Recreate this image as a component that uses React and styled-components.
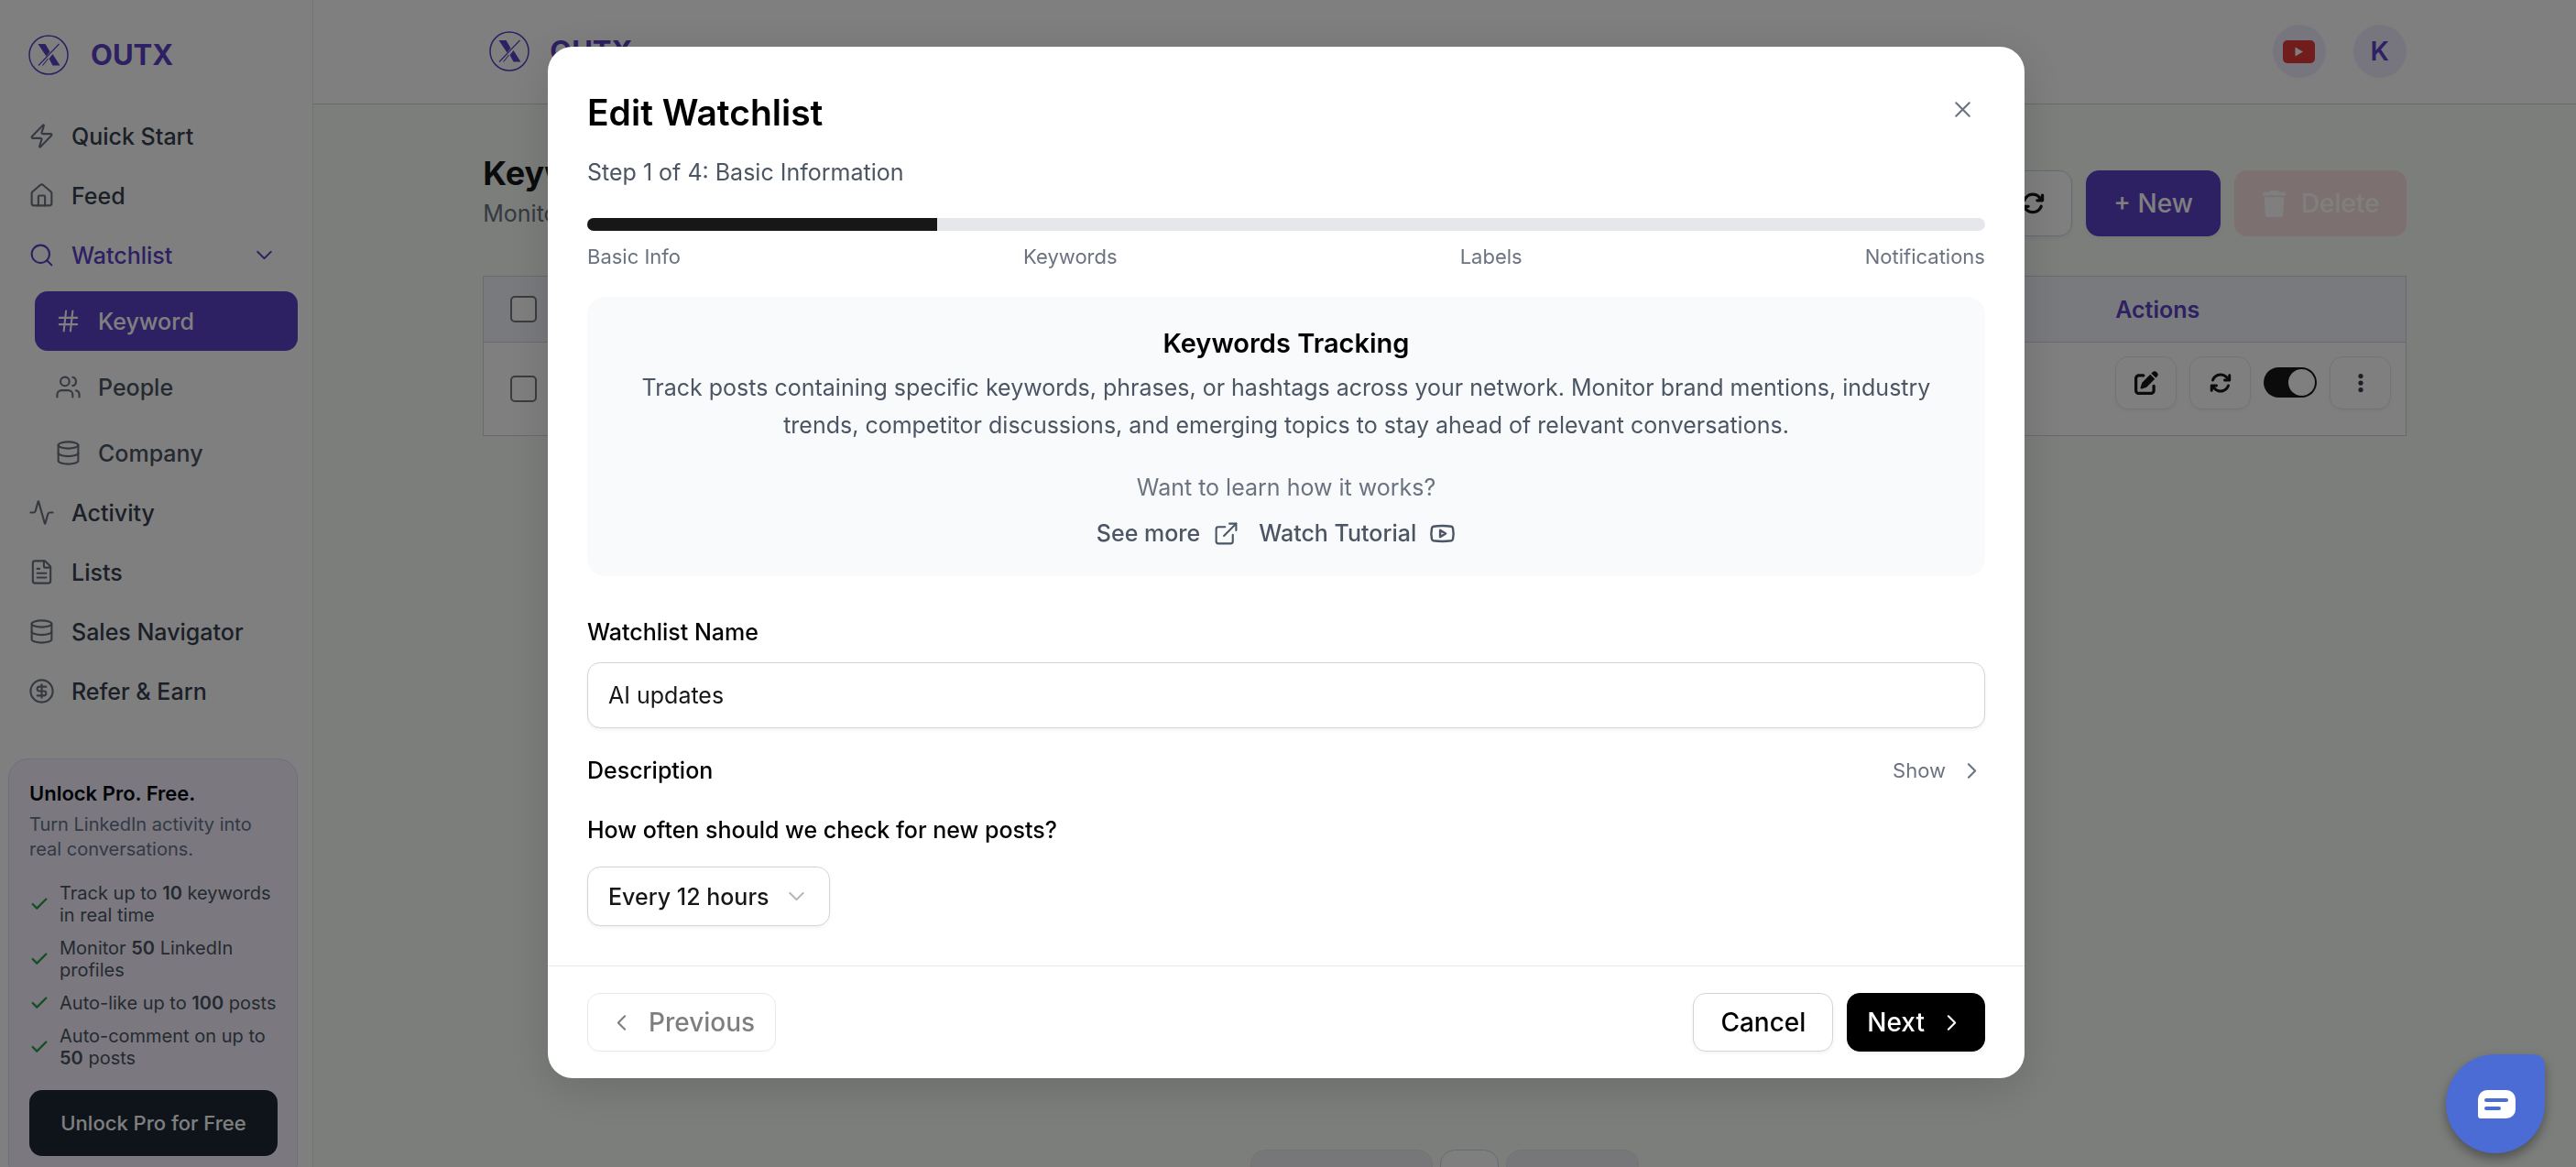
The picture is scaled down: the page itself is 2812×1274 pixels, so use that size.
import React, { useState } from "react";
import styled, { createGlobalStyle, css } from "styled-components";
import {
  Activity,
  Check,
  ChevronDown,
  ChevronLeft,
  ChevronRight,
  CircleDollarSign,
  Database,
  ExternalLink,
  FileText,
  Hash,
  House,
  Search,
  Users,
  X,
  Youtube,
  Zap,
} from "lucide-react";
import {
  FaArrowsRotate,
  FaEllipsisVertical,
  FaPenToSquare,
  FaTrash,
} from "react-icons/fa6";

const colors = {
  primary: "#5b40c6",
  primaryLight: "#eeeafa",
  page: "#f8fcf9",
  textMain: "#374151",
  textSecond: "#4b5563",
  textMuted: "#6b7280",
  border: "#d1d5db",
  line: "#e5e7eb",
  dark: "#171717",
};

const GlobalStyle = createGlobalStyle`
  * {
    box-sizing: border-box;
  }

  body {
    margin: 0;
    overflow: hidden;
    background: ${colors.page};
    color: #000;
    font-family: Inter, "Liberation Sans", sans-serif;
    font-size: 25px;
    line-height: 36px;
  }

  h1, h2, h3, p, ul {
    margin: 0;
    padding: 0;
  }

  ul {
    list-style: none;
  }

  a {
    color: inherit;
    text-decoration: none;
  }

  button, input, select {
    font: inherit;
    color: inherit;
    margin: 0;
  }

  svg {
    flex: none;
  }
`;

/* ---------- page shell ---------- */

const Shell = styled.div`
  display: flex;
  height: 100vh;
  overflow: hidden;
`;

const Sidebar = styled.aside`
  flex: none;
  width: 342px;
  padding: 38px 16px 0 9px;
  background: #fff;
  border-right: 1px solid ${colors.line};
`;

const Brand = styled.a`
  display: flex;
  align-items: center;
  gap: 24px;
  color: ${colors.primary};
  font-size: 31px;
  font-weight: 700;
`;

const SidebarBrand = styled(Brand)`
  padding-left: 22px;
  margin-bottom: 34px;
`;

const NavItem = styled.a`
  display: flex;
  align-items: center;
  gap: 18px;
  height: 65px;
  padding: 0 22px;
  border-radius: 14px;
  color: ${(props) => (props.$open ? colors.primary : colors.textMain)};
  font-weight: 500;

  & > svg {
    color: ${(props) => (props.$open ? colors.primary : colors.textMuted)};
  }

  & > span {
    flex: 1;
  }
`;

const SubNav = styled.div`
  display: flex;
  flex-direction: column;
  gap: 7px;
  padding: 7px 0 0 29px;
`;

const SubNavItem = styled(NavItem)`
  color: ${colors.textSecond};

  ${(props) =>
    props.$active &&
    css`
      background: ${colors.primary};
      color: #fff;

      & > svg {
        color: #fff;
      }
    `}
`;

const Promo = styled.section`
  margin-top: 41px;
  padding: 21px 21px 28px 22px;
  border: 1px solid #e0daf8;
  border-radius: 22px;
  background: #f6f3ff;
  font-size: 20px;

  h3 {
    font-size: 22px;
    font-weight: 600;
    line-height: 32px;
    color: #030712;
  }

  & > p {
    line-height: 27px;
    color: #64748b;
    margin: 5px 0 22px;
  }

  ul {
    display: flex;
    flex-direction: column;
    gap: 12px;
  }

  li {
    display: flex;
    align-items: center;
    gap: 11px;
    line-height: 24px;
    color: ${colors.textSecond};
  }

  li svg {
    color: #2a9d48;
  }

  b {
    font-weight: 600;
  }
`;

const PromoButton = styled.button`
  width: 100%;
  height: 72px;
  margin-top: 23px;
  border: 0;
  border-radius: 14px;
  background: #1e2936;
  color: #fff;
  font-size: 22px;
  font-weight: 500;
`;

const Main = styled.main`
  flex: 1;
  display: flex;
  flex-direction: column;
`;

const Header = styled.header`
  flex: none;
  height: 114px;
  background: #fff;
  border-bottom: 1px solid ${colors.border};
`;

const Container = styled.div`
  display: flex;
  width: 85%;
  margin: 0 auto;
`;

const HeaderRow = styled(Container)`
  align-items: center;
  gap: 30px;
  height: 112px;

  ${Brand} {
    gap: 22px;
    margin-right: auto;
    padding-left: 7px;
  }
`;

const Avatar = styled.a`
  display: grid;
  place-items: center;
  width: 58px;
  height: 58px;
  border-radius: 50%;
  background: ${colors.primaryLight};
  color: ${colors.primary};
  font-size: 29px;
  font-weight: 600;
`;

const Content = styled(Container)`
  flex: none;
  flex-direction: column;
  min-height: calc(100vh - 68px);
  padding: 53px 0 0;
`;

const TitleRow = styled.div`
  display: flex;
  justify-content: space-between;
  margin-bottom: 43px;

  h1 {
    margin-bottom: 4px;
    font-size: 36px;
    font-weight: 700;
    line-height: 44px;
    color: ${colors.dark};
  }

  p {
    color: ${colors.textMuted};
  }
`;

const Toolbar = styled.div`
  display: flex;
  align-items: center;
  gap: 15px;
  padding-top: 19px;
`;

const Button = styled.button`
  display: inline-flex;
  align-items: center;
  justify-content: center;
  gap: 15px;
  height: ${(props) => (props.$tall ? 72 : 64)}px;
  padding: 0 29px;
  border: 1px solid ${colors.border};
  border-radius: 14px;
  background: #fff;
  box-shadow: 0 2px 4px rgba(0, 0, 0, 0.05);
  font-size: 28px;
  font-weight: 500;

  &:disabled {
    opacity: 0.5;
  }
`;

const PrimaryButton = styled(Button)`
  border-color: ${colors.primary};
  background: ${colors.primary};
  color: #fff;
`;

const DangerButton = styled(Button)`
  border: 0;
  background: #fae0e0;
  color: #fff;

  &:disabled {
    opacity: 1;
    color: #fff;
    box-shadow: none;
  }
`;

const Table = styled.table`
  width: 100%;
  border-collapse: collapse;
  border: 1px solid ${colors.border};
  background: #fff;
  text-align: left;

  th {
    height: 72px;
    padding: 0 29px;
    background: #f3f5fb;
    border-bottom: 1px solid ${colors.border};
    color: ${colors.primary};
    font-weight: 600;
  }

  td {
    height: 102px;
    padding: 0 29px;
  }

  th:last-child,
  td:last-child {
    width: 332px;
    padding: 0 14px 0 15px;
  }
`;

const Tick = styled.input`
  appearance: none;
  display: block;
  width: 29px;
  height: 29px;
  border: 2px solid #78787a;
  border-radius: 5px;
  background: #fff;
`;

const RowActions = styled.div`
  display: flex;
  align-items: center;
  gap: 14px;
  padding-bottom: 14px;
`;

const IconButton = styled.button`
  display: grid;
  place-items: center;
  width: 67px;
  height: 58px;
  padding: 0;
  border: 1px solid ${colors.line};
  border-radius: 14px;
  background: #fff;
  color: ${(props) => (props.$soft ? colors.textMain : colors.dark)};
  box-shadow: 0 2px 4px rgba(0, 0, 0, 0.05);
`;

const Toggle = styled.input`
  appearance: none;
  display: flex;
  justify-content: flex-end;
  width: 58px;
  height: 33px;
  padding: 2px;
  border-radius: 17px;
  background: ${colors.dark};

  &::before {
    content: "";
    width: 29px;
    height: 29px;
    border-radius: 50%;
    background: #fff;
  }
`;

const Pagination = styled.nav`
  display: flex;
  justify-content: center;
  gap: 8px;
  margin-top: auto;
`;

const PageButton = styled.button`
  width: ${(props) => props.$width}px;
  height: 65px;
  border: 1px solid ${(props) => (props.$current ? colors.border : colors.line)};
  border-radius: 16px;
  background: ${(props) => (props.$current ? "#fff" : "#eeeff3")};
`;

/* ---------- modal ---------- */

const Overlay = styled.div`
  position: fixed;
  inset: 0;
  display: flex;
  justify-content: center;
  align-items: flex-start;
  padding: 51px 4px 0 0;
  background: rgba(0, 0, 0, 0.5);
`;

const Dialog = styled.div`
  width: 100%;
  max-width: 1612px;
  border-radius: 27px;
  background: #fff;
  box-shadow: 0 10px 50px rgba(0, 0, 0, 0.15);
`;

const DialogBody = styled.div`
  padding: 43px;
`;

const DialogHead = styled.div`
  display: flex;
  align-items: center;
  justify-content: space-between;
  height: 57px;
  margin-bottom: 19px;

  h2 {
    font-size: 39px;
    font-weight: 600;
  }
`;

const CloseButton = styled.button`
  display: flex;
  padding: 6px 10px 12px;
  border: 0;
  background: none;
  color: ${colors.textMuted};
`;

const StepText = styled.p`
  color: ${colors.textSecond};
`;

const Progress = styled.div`
  height: 14px;
  margin-top: 32px;
  overflow: hidden;
  border-radius: 7px;
  background: ${colors.line};

  div {
    height: 100%;
    background: ${colors.dark};
  }
`;

const StepLabels = styled.div`
  display: flex;
  justify-content: space-between;
  margin: 14px 0 30px;
  color: ${colors.textMuted};
  font-size: 22px;
  line-height: 28px;
`;

const Intro = styled.section`
  padding: 29px;
  border-radius: 20px;
  background: #f9fafc;
  text-align: center;

  h3 {
    margin-bottom: 7px;
    font-size: 29px;
    font-weight: 600;
    line-height: 43px;
  }

  p {
    color: ${colors.textSecond};
    line-height: 41px;
  }

  p + p {
    margin: 29px 0 14px;
    color: ${colors.textMuted};
    line-height: 36px;
  }
`;

const IntroLinks = styled.div`
  display: flex;
  justify-content: center;
  gap: 21px;
  padding-right: 22px;
  color: ${colors.textSecond};
  font-weight: 500;

  a {
    display: flex;
    align-items: center;
    gap: 14px;
  }
`;

const Field = styled.div`
  display: flex;
  flex-direction: column;
  align-items: flex-start;
  gap: ${(props) => props.$gap}px;
  margin-top: ${(props) => props.$top}px;
`;

const Label = styled.label`
  font-weight: 500;
`;

const box = css`
  border: 1px solid ${colors.border};
  border-radius: 14px;
  background: #fff;
  box-shadow: 0 2px 4px rgba(0, 0, 0, 0.05);
  color: ${colors.dark};
`;

const TextInput = styled.input`
  ${box}
  width: 100%;
  height: 72px;
  padding: 0 22px;
`;

const DescriptionRow = styled.div`
  display: flex;
  align-items: center;
  justify-content: space-between;
  margin-top: 28px;
  font-weight: 500;
`;

const ShowButton = styled.button`
  display: flex;
  align-items: center;
  gap: 14px;
  padding: 0;
  border: 0;
  background: none;
  color: ${colors.textMuted};
  font-size: 22px;
  font-weight: 400;
`;

const SelectBox = styled.div`
  display: inline-grid;
  align-items: center;

  & > * {
    grid-area: 1 / 1;
  }

  svg {
    justify-self: end;
    margin-right: 22px;
    color: #b4b4b4;
    pointer-events: none;
  }
`;

const Select = styled.select`
  ${box}
  appearance: none;
  width: 265px;
  height: 65px;
  padding: 0 60px 0 22px;
  font-weight: 500;
`;

const DialogFoot = styled.div`
  display: flex;
  gap: 15px;
  padding: 29px 43px;
  border-top: 1px solid ${colors.line};
`;

const PreviousButton = styled(Button)`
  margin-right: auto;
  padding: 0 22px;
`;

const NextButton = styled(Button)`
  padding: 0 21px;
  border-color: #000;
  background: #000;
  color: #fff;
`;

const ChatButton = styled.button`
  position: fixed;
  right: 34px;
  bottom: 15px;
  display: grid;
  place-items: center;
  width: 108px;
  height: 108px;
  padding: 0 0 0 2px;
  border: 0;
  border-radius: 54px 12px 54px 54px;
  background: #4a6cd4;
  box-shadow: 0 6px 12px rgba(0, 0, 0, 0.35);
`;

const Logo = () => (
  <svg width="44" height="44" viewBox="0 0 44 44" aria-hidden="true">
    <circle cx="22" cy="22" r="21" fill="none" stroke="currentColor" strokeWidth="1.5" />
    <path d="M10.5 10h8l5 8.500-4 5zM22.500 26l4-5 8 12.500h-8z" fill="currentColor" />
    <path d="M33.500 10L11 33.500M21.500 26l-6 7.500" stroke="currentColor" strokeWidth="1.1" />
  </svg>
);

const VideoBadge = () => (
  <svg width="35" height="25" viewBox="0 0 35 25" aria-hidden="true">
    <rect width="35" height="25" rx="5" fill="#e23b3b" />
    <path d="M13.500 7.500v10l8.500-5z" fill="#fff" />
  </svg>
);

const ChatIcon = () => (
  <svg width="41" height="31" viewBox="0 0 41 31" aria-hidden="true">
    <path
      d="M10 0h21a10 10 0 0 1 10 10v11a10 10 0 0 1-10 10H3a3 3 0 0 1-3-3V10A10 10 0 0 1 10 0z"
      fill="#fff"
    />
    <path d="M9 11h22M9 20h14" stroke="#4a6cd4" strokeWidth="4" strokeLinecap="round" />
  </svg>
);

const ICON = { size: 29, strokeWidth: 1.75 };

const topLinks = [
  { name: "Quick Start", Icon: Zap },
  { name: "Feed", Icon: House },
];

const subLinks = [
  { name: "Keyword", Icon: Hash, active: true },
  { name: "People", Icon: Users },
  { name: "Company", Icon: Database },
];

const bottomLinks = [
  { name: "Activity", Icon: Activity },
  { name: "Lists", Icon: FileText },
  { name: "Sales Navigator", Icon: Database },
  { name: "Refer & Earn", Icon: CircleDollarSign },
];

const steps = ["Basic Info", "Keywords", "Labels", "Notifications"];

const NavLinks = ({ links, as: Item = NavItem }) =>
  links.map(({ name, Icon, active }) => (
    <Item href="#" key={name} $active={active}>
      <Icon {...ICON} />
      <span>{name}</span>
    </Item>
  ));

const SideMenu = () => (
  <Sidebar>
    <SidebarBrand href="#">
      <Logo />
      OUTX
    </SidebarBrand>
    <nav>
      <NavLinks links={topLinks} />
      <NavItem href="#" $open>
        <Search {...ICON} />
        <span>Watchlist</span>
        <ChevronDown {...ICON} />
      </NavItem>
      <SubNav>
        <NavLinks links={subLinks} as={SubNavItem} />
      </SubNav>
      <NavLinks links={bottomLinks} />
    </nav>
    <Promo>
      <h3>Unlock Pro. Free.</h3>
      <p>Turn LinkedIn activity into real conversations.</p>
      <ul>
        <li><Check size={22} strokeWidth={2.5} /><span>Track up to <b>10</b> keywords in real time</span></li>
        <li><Check size={22} strokeWidth={2.5} /><span>Monitor <b>50</b> LinkedIn profiles</span></li>
        <li><Check size={22} strokeWidth={2.5} /><span>Auto-like up to <b>100</b> posts</span></li>
        <li><Check size={22} strokeWidth={2.5} /><span>Auto-comment on up to <b>50</b> posts</span></li>
      </ul>
      <PromoButton>Unlock Pro for Free</PromoButton>
    </Promo>
  </Sidebar>
);

const WatchlistPage = () => (
  <Main>
    <Header>
      <HeaderRow>
        <Brand href="#">
          <Logo />
          OUTX
        </Brand>
        <Avatar href="#" aria-label="Video tutorials"><VideoBadge /></Avatar>
        <Avatar href="#">K</Avatar>
      </HeaderRow>
    </Header>
    <Content>
      <TitleRow>
        <div>
          <h1>Keywords</h1>
          <p>Monitor keywords</p>
        </div>
        <Toolbar>
          <Button $tall aria-label="Refresh"><FaArrowsRotate size={26} color={colors.dark} /></Button>
          <PrimaryButton $tall>+ New</PrimaryButton>
          <DangerButton $tall disabled><FaTrash size={29} />Delete</DangerButton>
        </Toolbar>
      </TitleRow>
      <Table>
        <thead>
          <tr>
            <th><Tick type="checkbox" aria-label="Select all" /></th>
            <th>Actions</th>
          </tr>
        </thead>
        <tbody>
          <tr>
            <td><Tick type="checkbox" aria-label="Select AI updates" /></td>
            <td>
              <RowActions>
                <IconButton aria-label="Edit"><FaPenToSquare size={26} /></IconButton>
                <IconButton aria-label="Sync"><FaArrowsRotate size={24} /></IconButton>
                <Toggle type="checkbox" role="switch" defaultChecked aria-label="Active" />
                <IconButton $soft aria-label="More"><FaEllipsisVertical size={24} /></IconButton>
              </RowActions>
            </td>
          </tr>
        </tbody>
      </Table>
      <Pagination>
        <PageButton $width={199} aria-label="Previous page" />
        <PageButton $width={64} $current aria-label="Page 1" />
        <PageButton $width={145} aria-label="Next page" />
      </Pagination>
    </Content>
  </Main>
);

const EditWatchlist = () => {
  const [name, setName] = useState("AI updates");
  const step = 1;

  return (
    <Overlay>
      <Dialog role="dialog" aria-modal="true" aria-labelledby="dialog-title">
        <DialogBody>
          <DialogHead>
            <h2 id="dialog-title">Edit Watchlist</h2>
            <CloseButton aria-label="Close"><X {...ICON} /></CloseButton>
          </DialogHead>
          <StepText>Step {step} of {steps.length}: Basic Information</StepText>
          <Progress>
            <div style={{ width: `${(step / steps.length) * 100}%` }} />
          </Progress>
          <StepLabels>
            {steps.map((label) => <span key={label}>{label}</span>)}
          </StepLabels>
          <Intro>
            <h3>Keywords Tracking</h3>
            <p>
              Track posts containing specific keywords, phrases, or hashtags across your network.
              Monitor brand mentions, industry trends, competitor discussions, and emerging topics
              to stay ahead of relevant conversations.
            </p>
            <p>Want to learn how it works?</p>
            <IntroLinks>
              <a href="#">See more <ExternalLink {...ICON} /></a>
              <a href="#">Watch Tutorial <Youtube size={29} strokeWidth={2} /></a>
            </IntroLinks>
          </Intro>
          <Field $top={43} $gap={15}>
            <Label htmlFor="name">Watchlist Name</Label>
            <TextInput id="name" value={name} onChange={(e) => setName(e.target.value)} />
          </Field>
          <DescriptionRow>
            <span>Description</span>
            <ShowButton>Show <ChevronRight {...ICON} /></ShowButton>
          </DescriptionRow>
          <Field $top={29} $gap={22}>
            <Label htmlFor="interval">How often should we check for new posts?</Label>
            <SelectBox>
              <Select id="interval" defaultValue="12">
                <option value="12">Every 12 hours</option>
                <option value="24">Every 24 hours</option>
              </Select>
              <ChevronDown {...ICON} />
            </SelectBox>
          </Field>
        </DialogBody>
        <DialogFoot>
          <PreviousButton disabled><ChevronLeft {...ICON} />Previous</PreviousButton>
          <Button>Cancel</Button>
          <NextButton>Next<ChevronRight {...ICON} /></NextButton>
        </DialogFoot>
      </Dialog>
    </Overlay>
  );
};

const App = () => (
  <>
    <GlobalStyle />
    <Shell>
      <SideMenu />
      <WatchlistPage />
    </Shell>
    <EditWatchlist />
    <ChatButton aria-label="Open chat"><ChatIcon /></ChatButton>
  </>
);

export default App;
